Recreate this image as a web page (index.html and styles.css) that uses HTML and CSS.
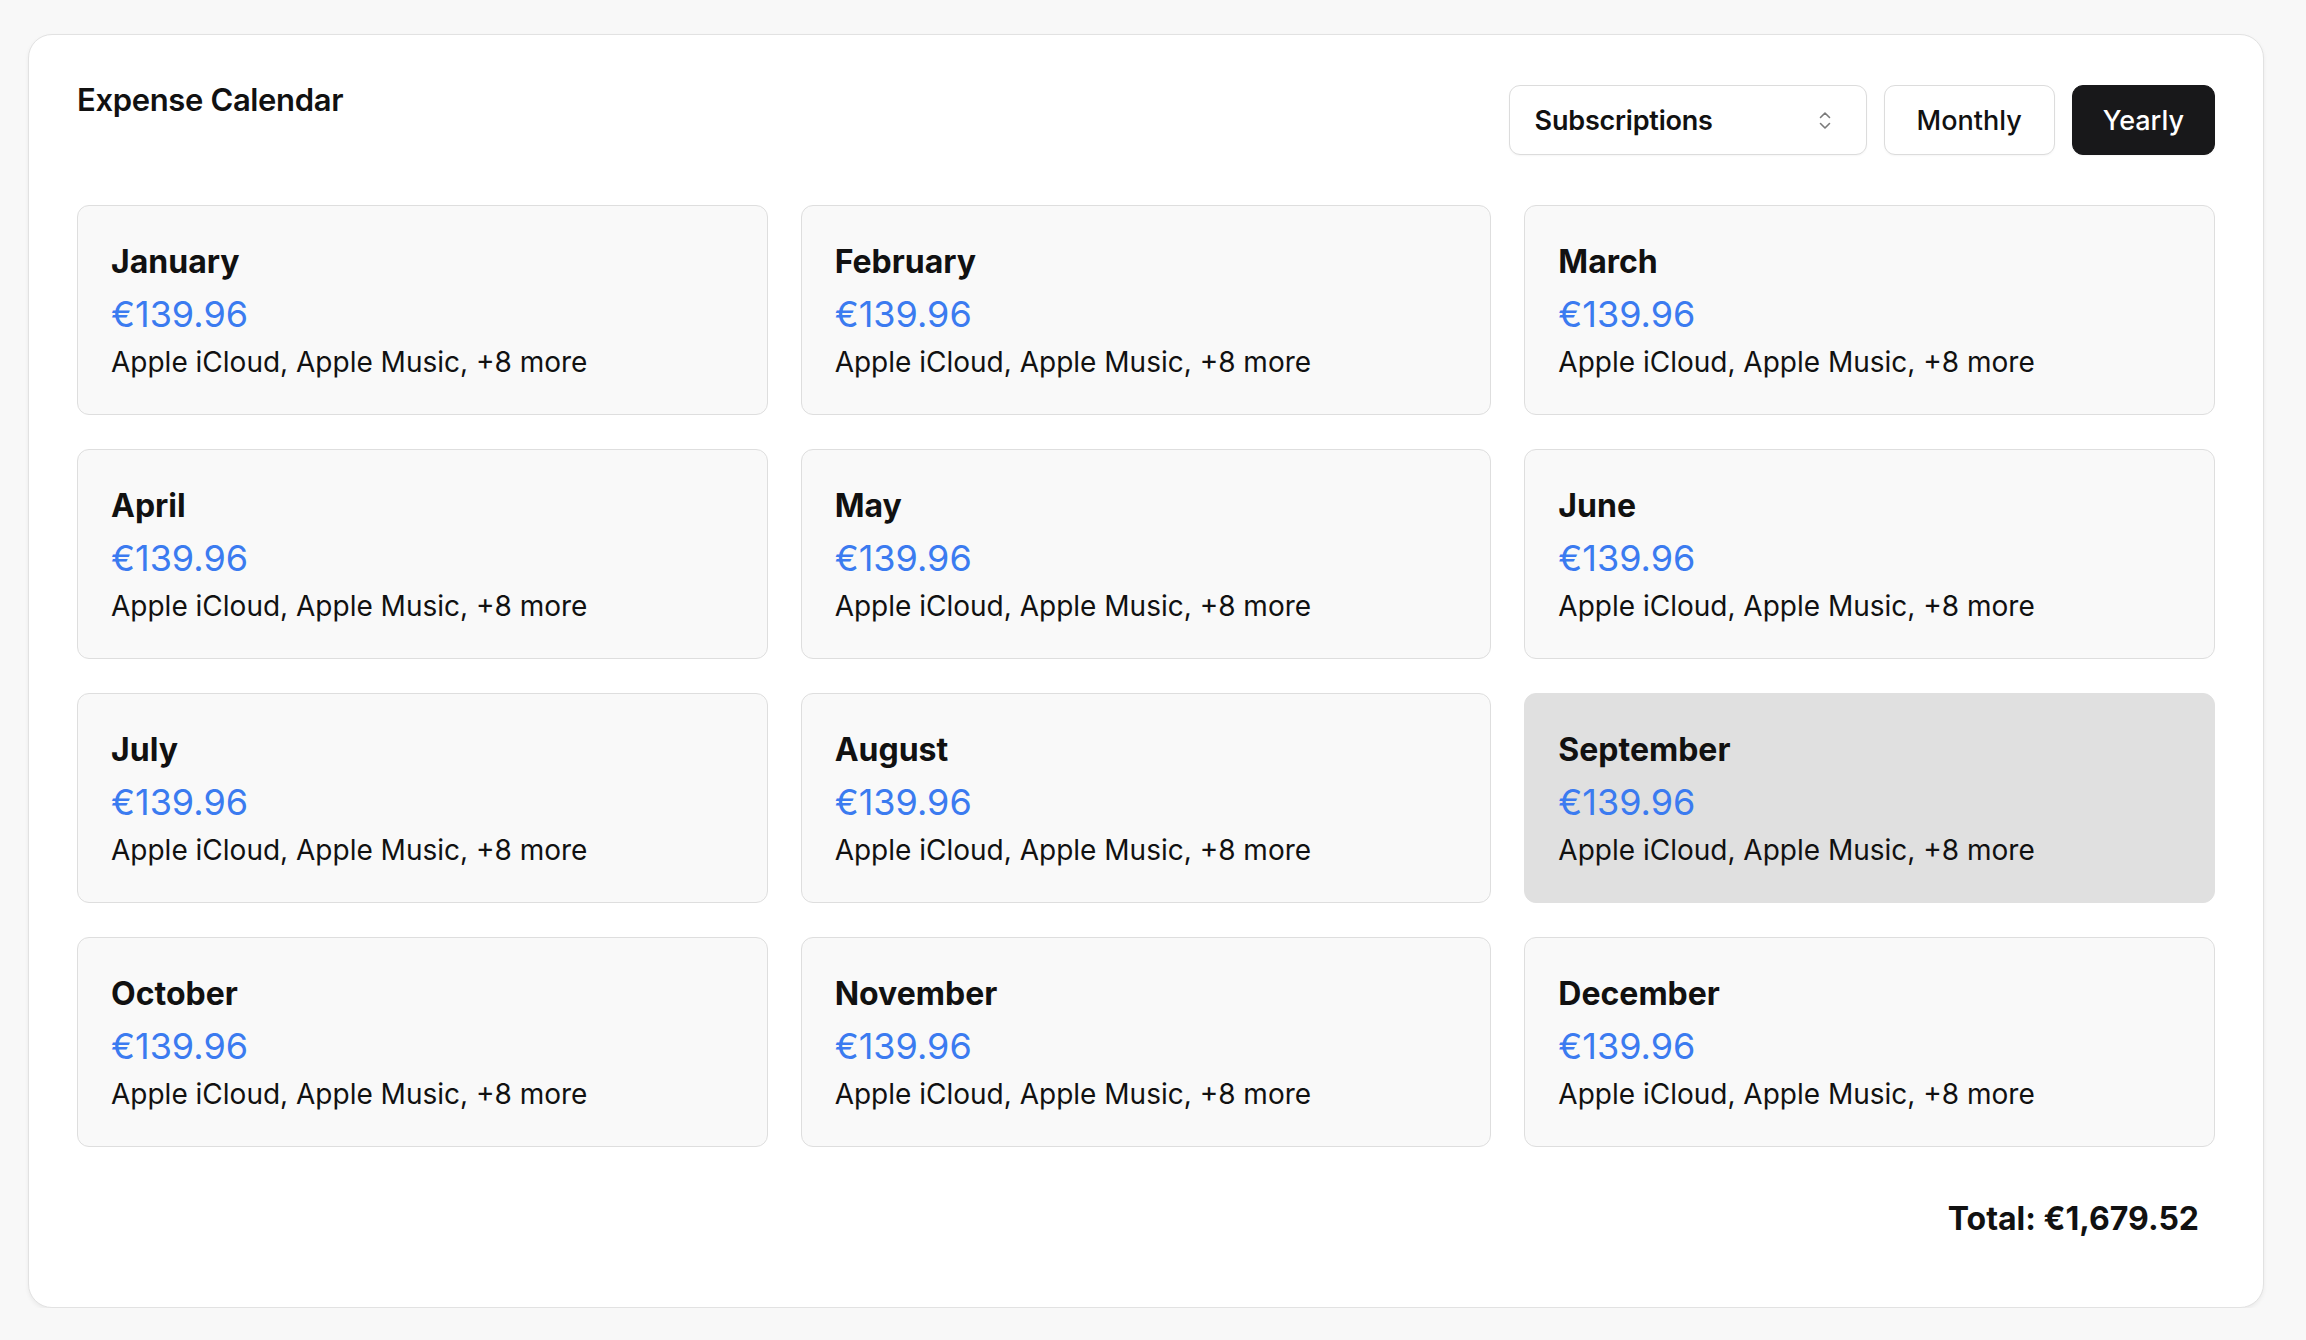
FILE: index.html
```html
<!DOCTYPE html>
<html lang="en">
<head>
<meta charset="utf-8">
<title>Expense Calendar</title>
<link rel="stylesheet" href="styles.css">
</head>
<body>
<div class="panel">
  <div class="header">
    <h1 class="title">Expense Calendar</h1>
    <div class="controls">
      <div class="select">
        <span class="select-label">Subscriptions</span>
        <svg class="chev" width="12" height="19" viewBox="0 0 12 19" fill="none" stroke="#7a7a7a" stroke-width="1.6" stroke-linecap="round" stroke-linejoin="round"><path d="M1.5 6.5 6 2l4.5 4.5"/><path d="M1.5 12.5 6 17l4.5-4.5"/></svg>
      </div>
      <button class="btn">Monthly</button>
      <button class="btn btn-active">Yearly</button>
    </div>
  </div>
  <div class="grid">
    <div class="month"><div class="m-name">January</div><div class="m-price">€139.96</div><div class="m-desc">Apple iCloud, Apple Music, +8 more</div></div>
    <div class="month"><div class="m-name">February</div><div class="m-price">€139.96</div><div class="m-desc">Apple iCloud, Apple Music, +8 more</div></div>
    <div class="month"><div class="m-name">March</div><div class="m-price">€139.96</div><div class="m-desc">Apple iCloud, Apple Music, +8 more</div></div>
    <div class="month"><div class="m-name">April</div><div class="m-price">€139.96</div><div class="m-desc">Apple iCloud, Apple Music, +8 more</div></div>
    <div class="month"><div class="m-name">May</div><div class="m-price">€139.96</div><div class="m-desc">Apple iCloud, Apple Music, +8 more</div></div>
    <div class="month"><div class="m-name">June</div><div class="m-price">€139.96</div><div class="m-desc">Apple iCloud, Apple Music, +8 more</div></div>
    <div class="month"><div class="m-name">July</div><div class="m-price">€139.96</div><div class="m-desc">Apple iCloud, Apple Music, +8 more</div></div>
    <div class="month"><div class="m-name">August</div><div class="m-price">€139.96</div><div class="m-desc">Apple iCloud, Apple Music, +8 more</div></div>
    <div class="month month-current"><div class="m-name">September</div><div class="m-price">€139.96</div><div class="m-desc">Apple iCloud, Apple Music, +8 more</div></div>
    <div class="month"><div class="m-name">October</div><div class="m-price">€139.96</div><div class="m-desc">Apple iCloud, Apple Music, +8 more</div></div>
    <div class="month"><div class="m-name">November</div><div class="m-price">€139.96</div><div class="m-desc">Apple iCloud, Apple Music, +8 more</div></div>
    <div class="month"><div class="m-name">December</div><div class="m-price">€139.96</div><div class="m-desc">Apple iCloud, Apple Music, +8 more</div></div>
  </div>
  <div class="total">Total: €1,679.52</div>
</div>
</body>
</html>
```

FILE: styles.css
```css
* { box-sizing: border-box; }
html, body { margin: 0; padding: 0; }
body {
  background: #f8f8f8;
  font-family: Inter, "Noto Sans", sans-serif;
  color: #111111;
  padding: 34px 42px 0 28px;
}
.panel {
  width: 2236px;
  background: #ffffff;
  border: 1px solid #e2e2e2;
  border-radius: 24px;
  box-shadow: 0 2px 4px rgba(0, 0, 0, 0.06);
  padding: 48px;
}
.header {
  display: flex;
  justify-content: space-between;
  align-items: flex-start;
  margin-bottom: 50px;
}
.title {
  margin: 0;
  font-size: 31px;
  line-height: 34px;
  font-weight: 600;
  letter-spacing: -0.35px;
}
.controls {
  display: flex;
  gap: 17px;
  margin-top: 2px;
}
.select {
  width: 358px;
  height: 70px;
  border: 1px solid #dcdcdc;
  border-radius: 11px;
  background: #ffffff;
  display: flex;
  align-items: center;
  justify-content: space-between;
  padding: 0 35px 0 25px;
  box-shadow: 0 1px 2px rgba(0, 0, 0, 0.04);
}
.select-label {
  font-size: 27px;
  font-weight: 600;
  letter-spacing: -0.2px;
}
.chev { display: block; }
.btn {
  height: 70px;
  padding: 0 32px;
  border: 1px solid #dcdcdc;
  border-radius: 11px;
  background: #ffffff;
  font-family: Inter, "Noto Sans", sans-serif;
  font-size: 27px;
  font-weight: 500;
  color: #111111;
  box-shadow: 0 1px 2px rgba(0, 0, 0, 0.04);
}
.btn-active {
  padding: 0 30px;
  background: #18181a;
  border-color: #18181a;
  color: #ffffff;
}
.grid {
  display: grid;
  grid-template-columns: repeat(3, 1fr);
  gap: 34px 33px;
}
.month {
  height: 210px;
  border: 1px solid #dedede;
  border-radius: 12px;
  background: #f9f9f9;
  padding: 32px 32px 32px 33px;
}
.month-current {
  background: #e0e0e0;
  border-color: #e0e0e0;
}
.m-name {
  font-size: 32px;
  line-height: 48px;
  font-weight: 700;
}
.m-price {
  font-size: 36px;
  line-height: 56px;
  font-weight: 400;
  color: #3b7bf0;
}
.m-desc {
  font-size: 28px;
  line-height: 40px;
  font-weight: 400;
}
.total {
  margin-top: 32px;
  padding: 16px;
  text-align: right;
  font-size: 32px;
  line-height: 48px;
  font-weight: 700;
}
```
